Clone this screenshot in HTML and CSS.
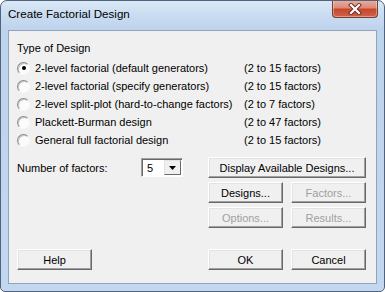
FILE: index.html
```html
<!DOCTYPE html>
<html>
<head>
<meta charset="utf-8">
<link rel="stylesheet" href="styles.css">
</head>
<body>
<div class="window">
  <div class="titlebar">
    <span class="title">Create Factorial Design</span>
    <div class="close">
      <svg width="14" height="12" viewBox="0 0 14 12">
        <path d="M3 2 L11 10 M11 2 L3 10" stroke="#6b2a1e" stroke-width="4" stroke-linecap="square" fill="none"/>
        <path d="M3 2 L11 10 M11 2 L3 10" stroke="#ffffff" stroke-width="2.2" stroke-linecap="square" fill="none"/>
      </svg>
    </div>
  </div>
  <div class="client">
    <div class="group-label">Type of Design</div>
    <div class="options">
      <div class="opt"><span class="radio checked"></span><span class="opt-label">2-level factorial (default generators)</span><span class="range">(2 to 15 factors)</span></div>
      <div class="opt"><span class="radio"></span><span class="opt-label">2-level factorial (specify generators)</span><span class="range">(2 to 15 factors)</span></div>
      <div class="opt"><span class="radio"></span><span class="opt-label">2-level split-plot (hard-to-change factors)</span><span class="range">(2 to 7 factors)</span></div>
      <div class="opt"><span class="radio"></span><span class="opt-label">Plackett-Burman design</span><span class="range">(2 to 47 factors)</span></div>
      <div class="opt"><span class="radio"></span><span class="opt-label">General full factorial design</span><span class="range">(2 to 15 factors)</span></div>
    </div>
    <div class="controls">
      <div class="factors-field">
        <span class="field-label">Number of factors:</span>
        <div class="combo">
          <span class="combo-value">5</span>
          <span class="combo-btn"><svg width="7" height="4" viewBox="0 0 7 4"><path d="M0 0 H7 L3.5 4 Z" fill="#000"/></svg></span>
        </div>
      </div>
      <button class="btn span2">Display Available Designs...</button>
      <div></div>
      <button class="btn">Designs...</button>
      <button class="btn" disabled>Factors...</button>
      <div></div>
      <button class="btn" disabled>Options...</button>
      <button class="btn" disabled>Results...</button>
    </div>
    <div class="footer">
      <button class="btn help">Help</button>
      <button class="btn">OK</button>
      <button class="btn">Cancel</button>
    </div>
  </div>
</div>
</body>
</html>
```

FILE: styles.css
```css
html, body {
  margin: 0;
  padding: 0;
  background: #ffffff;
}

body {
  font-family: "Liberation Sans", Arial, sans-serif;
  font-size: 11px;
  color: #000;
}

.window {
  width: 385px;
  height: 292px;
  box-sizing: border-box;
  border: 1px solid #4f637e;
  border-radius: 7px 7px 5px 5px;
  background: linear-gradient(#dbe8f6 0px, #c9dcf1 14px, #bed3ec 29px, #c3d7ee 100%);
  display: flex;
  flex-direction: column;
  overflow: hidden;
}

.titlebar {
  height: 29px;
  flex: none;
  display: flex;
  justify-content: space-between;
  align-items: flex-start;
  padding: 0 6px 0 7px;
}

.title {
  font-size: 11.6px;
  line-height: 16px;
  margin-top: 5px;
  color: #000;
}

.close {
  width: 46px;
  height: 18px;
  box-sizing: border-box;
  margin-top: -1px;
  border: 1px solid #7a3b30;
  border-top: none;
  border-radius: 0 0 4px 4px;
  background: linear-gradient(#eab1a3 0%, #dc8a75 45%, #c6472f 55%, #d1614a 100%);
  box-shadow: inset 0 0 0 1px rgba(255, 255, 255, 0.35);
  display: flex;
  align-items: center;
  justify-content: center;
}

.client {
  flex: 1;
  margin: 0 7px 7px;
  border: 1px solid #8ea3be;
  background: #f0f0f0;
  padding: 10px 0 0 8px;
}

.group-label {
  line-height: 14px;
  height: 14px;
}

.options {
  margin-top: 4px;
}

.opt {
  height: 18px;
  display: flex;
  align-items: center;
}

.radio {
  width: 13px;
  height: 13px;
  box-sizing: border-box;
  border-radius: 50%;
  border: 1px solid;
  border-color: #8a8a8a #f8f8f8 #f8f8f8 #8a8a8a;
  background: #fbfbfb;
  box-shadow: inset 1px 1px 0 #c8c8c8;
  position: relative;
  flex: none;
}

.radio.checked::after {
  content: "";
  position: absolute;
  left: 3.5px;
  top: 3.5px;
  width: 4px;
  height: 4px;
  border-radius: 50%;
  background: #000;
}

.opt-label {
  margin-left: 5px;
  width: 209px;
  flex: none;
  white-space: nowrap;
}

.range {
  white-space: nowrap;
}

.controls {
  margin-top: 8px;
  display: grid;
  grid-template-columns: 183px 75px 75px;
  grid-template-rows: 21px 21px 21px;
  column-gap: 8px;
  row-gap: 4px;
}

.span2 {
  grid-column: span 2;
}

.factors-field {
  display: flex;
  align-items: center;
}

.field-label {
  width: 124px;
  flex: none;
}

.combo {
  width: 42px;
  height: 19px;
  box-sizing: border-box;
  border: 1px solid;
  border-color: #a0a0a0 #ffffff #ffffff #a0a0a0;
  box-shadow: inset 1px 1px 0 #696969;
  background: #fff;
  display: flex;
}

.combo-value {
  flex: 1;
  padding: 2px 0 0 5px;
  line-height: 14px;
}

.combo-btn {
  width: 17px;
  box-sizing: border-box;
  margin: 1px 1px 1px 0;
  border: 1px solid;
  border-color: #e3e3e3 #696969 #696969 #e3e3e3;
  background: #f0f0f0;
  display: flex;
  align-items: center;
  justify-content: center;
}

.btn {
  font-family: inherit;
  font-size: 11px;
  color: #000;
  height: 21px;
  padding: 0;
  margin: 0;
  box-sizing: border-box;
  border: 1px solid;
  border-color: #ffffff #696969 #696969 #ffffff;
  box-shadow: inset -1px -1px 0 #a0a0a0, inset 1px 1px 0 #e3e3e3;
  background: #f0f0f0;
  border-radius: 0;
}

.btn:disabled {
  color: #a0a0a0;
}

.footer {
  margin-top: 21px;
  display: grid;
  grid-template-columns: 183px 75px 75px;
  column-gap: 8px;
}

.help {
  width: 75px;
}
```
